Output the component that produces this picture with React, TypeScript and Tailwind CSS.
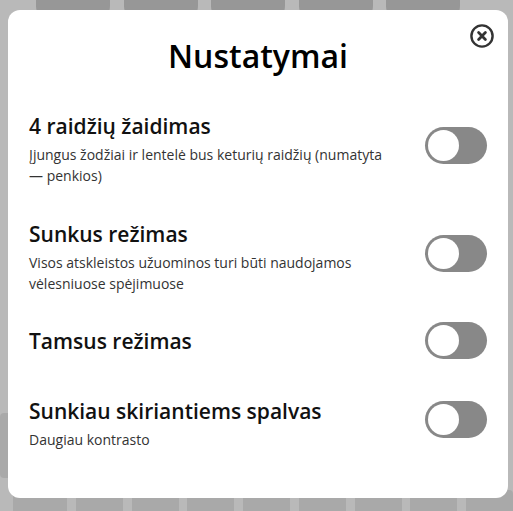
import React from "react";

const font = { fontFamily: '"Open Sans", "Noto Sans", sans-serif' };

function Toggle() {
  return (
    <div className="mb-[8px] flex h-[37px] w-[62px] shrink-0 items-center rounded-full bg-[#888888] p-[3px]">
      <div className="h-[31px] w-[31px] rounded-full bg-white" />
    </div>
  );
}

function Row({ title, desc, className = "" }: { title: string; desc?: string; className?: string }) {
  return (
    <div className={"flex items-center justify-between " + className}>
      <div className={"w-[365px] " + (desc ? "" : "pb-[8px]")}>
        <div className="text-[21px] font-semibold leading-[28px] text-[#111]">{title}</div>
        {desc && <div className="mt-[4px] text-[14px] leading-[21px] text-[#333]">{desc}</div>}
      </div>
      <Toggle />
    </div>
  );
}

export default function App() {
  const tiles = [0, 1, 2, 3, 4];
  const keys = [0, 1, 2, 3, 4, 5, 6, 7];
  return (
    <div className="relative h-[511px] w-[513px] overflow-hidden bg-[#b9b9b9]" style={font}>
      <div className="flex h-full flex-col justify-between">
        <div className="flex gap-[13.5px] pl-[36px]">
          {tiles.map((t) => (
            <div key={t} className="-mt-[60px] h-[80px] w-[74px] rounded-[14px] bg-[#979797]" />
          ))}
        </div>
        <div className="flex flex-col gap-[12px]">
          <div className="flex gap-[8.5px]">
            <div className="h-[65px] w-[60px] rounded-[4px] bg-[#a9a9a9]" />
          </div>
          <div className="flex h-[21px] gap-[8.7px] pl-[13px]">
            <div className="h-[40px] w-[57px] rounded-[4px] bg-[#a9a9a9]" />
            {keys.map((k) => (
              <div key={k} className="h-[40px] w-[49.5px] rounded-[4px] bg-[#a9a9a9]" />
            ))}
          </div>
        </div>
      </div>

      <div className="absolute left-[8px] top-[10px] h-[488px] w-[500px] rounded-[12px] bg-white px-[21px]">
        <button className="absolute right-[14px] top-[14px] h-[24px] w-[24px] text-[#333]">
          <svg viewBox="0 0 24 24" width="24" height="24" fill="none" stroke="currentColor">
            <circle cx="12" cy="12" r="10.6" strokeWidth="2.4" />
            <path d="M8.6 8.6 L15.4 15.4 M15.4 8.6 L8.6 15.4" strokeWidth="2.8" strokeLinecap="round" />
          </svg>
        </button>
        <h1 className="pt-[26px] text-center text-[32px] font-semibold leading-[40px] text-black">Nustatymai</h1>
        <div className="mt-[36px] flex flex-col">
          <Row title="4 raidžių žaidimas" desc="Įjungus žodžiai ir lentelė bus keturių raidžių (numatyta — penkios)" />
          <Row className="mt-[34px]" title="Sunkus režimas" desc="Visos atskleistos užuominos turi būti naudojamos vėlesniuose spėjimuose" />
          <Row className="mt-[28px]" title="Tamsus režimas" />
          <Row className="mt-[30px]" title="Sunkiau skiriantiems spalvas" desc="Daugiau kontrasto" />
        </div>
      </div>
    </div>
  );
}
